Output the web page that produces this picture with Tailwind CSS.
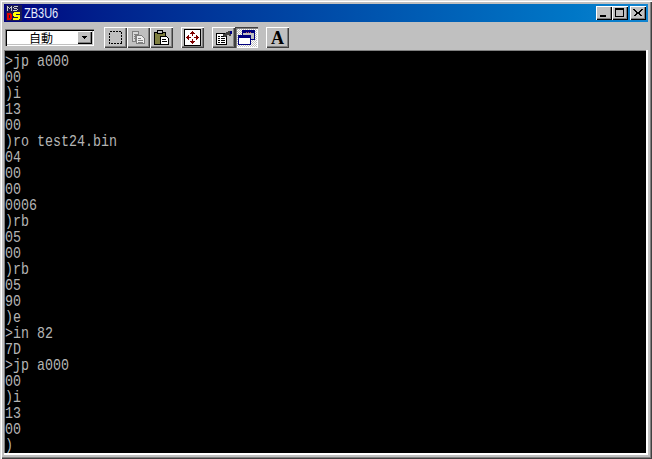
<!DOCTYPE html>
<html lang="ja">
<head>
  <meta charset="utf-8"/>
  <title>ZB3U6</title>
  <script src="https://cdn.jsdelivr.net/npm/@tailwindcss/browser@4"></script>
</head>
<body class="bg-[#c0c0c0] overflow-hidden">
  <!-- window frame -->
  <div class="w-[652px] h-[459px] flex flex-col bg-[#c0c0c0] pt-1 pb-[4px] pl-1 pr-[4px] shadow-[inset_1px_1px_0_#dfdfdf,inset_2px_2px_0_#ffffff,inset_-1px_-1px_0_#404040,inset_-2px_-2px_0_#808080]">
    <!-- title bar -->
    <div class="h-[18px] shrink-0 flex items-center bg-gradient-to-r from-[#000080] to-[#1084d0] pl-[2px] pr-[2px]">
      <svg class="w-4 h-4 shrink-0" viewBox="0 0 16 16" shape-rendering="crispEdges">
        <rect x="0" y="0" width="16" height="16" fill="#1a1a50"/>
        <path d="M1 1h1v5h-1zM2 2h1v1h-1zM3 3h1v1h-1zM4 2h1v1h-1zM5 1h1v5h-1z" fill="#c8c8c8"/>
        <path d="M8 1h4v1h-4zM7 2h1v1h-1zM8 3h3v1h-3zM11 4h1v1h-1zM7 5h4v1h-4z" fill="#c8c8c8"/>
        <path d="M1 8h4v1h1v5h-1v1h-4zM3 10v3h1v-3z" fill="#e00000"/>
        <path d="M8 7h6v2h-4v1h4v4h-1v1h-6v-2h5v-1h-4v-1h-1v-3h1z" fill="#ffff00"/>
      </svg>
      <span class="ml-[2px] inline-block scale-y-125 text-[11px] leading-none text-[#e8eeff] font-['Liberation_Sans',sans-serif]">ZB3U6</span>
      <div class="ml-auto flex items-center">
        <button class="w-4 h-[14px] bg-[#c0c0c0] shadow-[inset_1px_1px_0_#fff,inset_-1px_-1px_0_#000,inset_-2px_-2px_0_#808080] flex items-end pl-[4px] pb-[3px]"><span class="block w-[6px] h-[2px] bg-black"></span></button>
        <button class="w-4 h-[14px] bg-[#c0c0c0] shadow-[inset_1px_1px_0_#fff,inset_-1px_-1px_0_#000,inset_-2px_-2px_0_#808080] flex items-start pl-[3px] pt-[2px]"><span class="block w-[9px] h-[9px] border border-black border-t-2"></span></button>
        <button class="ml-[2px] w-4 h-[14px] bg-[#c0c0c0] shadow-[inset_1px_1px_0_#fff,inset_-1px_-1px_0_#000,inset_-2px_-2px_0_#808080] flex items-center justify-center">
          <svg class="w-[10px] h-2" viewBox="0 0 10 8" shape-rendering="crispEdges"><path d="M0 0h2v1h1v1h1v1h2v-1h1v-1h1v-1h2v1h-1v1h-1v1h-1v2h1v1h1v1h-2v-1h-1v-1h-2v1h-1v1h-2v-1h1v-1h1v-2h-1v-1h-1v-1h-1z" fill="#000"/></svg>
        </button>
      </div>
    </div>

    <!-- toolbar -->
    <div class="h-[28px] shrink-0 flex items-center pl-[1px] pt-[3px]">
      <div class="w-[89px] h-[17px] bg-white shadow-[inset_1px_1px_0_#808080,inset_2px_2px_0_#000,inset_-1px_-1px_0_#fff,inset_-2px_-2px_0_#c0c0c0] flex items-center pr-[2px]">
        <span class="flex-1 text-center text-[12px] leading-none text-black font-['Noto_Sans_CJK_JP',sans-serif]">自動</span>
        <span class="w-[15px] h-[13px] bg-[#c0c0c0] shadow-[inset_1px_1px_0_#fff,inset_-1px_-1px_0_#000,inset_-2px_-2px_0_#808080] flex items-center justify-center">
          <svg class="w-[7px] h-1" viewBox="0 0 7 4" shape-rendering="crispEdges"><path d="M1 0h5v1h-1v1h-1v1h-1v-1h-1v-1h-1z" fill="#000"/></svg>
        </span>
      </div>

      <div class="ml-[10px] flex">
        <!-- select -->
        <button class="w-[23px] h-[21px] flex items-center justify-center bg-[#c0c0c0] shadow-[inset_1px_1px_0_#fff,inset_-1px_-1px_0_#404040,inset_-2px_-2px_0_#808080]">
          <svg class="w-[15px] h-[15px]" viewBox="0 0 15 15" shape-rendering="crispEdges"><rect x="1.5" y="1.5" width="12" height="12" fill="none" stroke="#000" stroke-dasharray="2 1"/></svg>
        </button>
        <!-- copy, greyed -->
        <button class="w-[23px] h-[21px] flex items-center justify-center bg-[#c0c0c0] shadow-[inset_1px_1px_0_#fff,inset_-1px_-1px_0_#404040,inset_-2px_-2px_0_#808080]">
          <svg class="w-[15px] h-[15px]" viewBox="0 0 15 15" shape-rendering="crispEdges">
            <path d="M1.5 1.5h6v3h-3v7h-3z" fill="#d8d8d8" stroke="#808080"/>
            <path d="M5.5 5.5h5l3 3v5h-8z" fill="#eeeeee" stroke="#808080"/>
            <path d="M3 4h3M3 6h1M3 8h1M7 8h3M7 10h5M7 12h5" stroke="#808080"/>
          </svg>
        </button>
        <!-- paste -->
        <button class="w-[23px] h-[21px] flex items-center justify-center bg-[#c0c0c0] shadow-[inset_1px_1px_0_#fff,inset_-1px_-1px_0_#404040,inset_-2px_-2px_0_#808080]">
          <svg class="w-[17px] h-[17px]" viewBox="0 0 17 17" shape-rendering="crispEdges">
            <path d="M1.5 3.5h11v12h-11z" fill="#808040" stroke="#000"/>
            <path d="M4.5 1.5h5v3h-5z" fill="#c0c0c0" stroke="#000"/>
            <path d="M7.5 7.5h6l2 2v6h-8z" fill="#fff" stroke="#000"/>
            <path d="M9 10h4M9 12h5" stroke="#000"/>
          </svg>
        </button>
        <!-- fit -->
        <button class="ml-2 w-[23px] h-[21px] flex items-center justify-center bg-[#c0c0c0] shadow-[inset_1px_1px_0_#fff,inset_-1px_-1px_0_#404040,inset_-2px_-2px_0_#808080]">
          <svg class="w-[17px] h-[17px]" viewBox="0 0 17 17" shape-rendering="crispEdges">
            <rect x="0.5" y="0.5" width="16" height="16" fill="#fff" stroke="#000"/>
            <path d="M8 2h1v1h1v1h1v1h-2v2h-1v-2h-2v-1h1v-1h1zM8 10h1v2h2v1h-1v1h-1v1h-1v-1h-1v-1h-1v-1h2zM5 6v2h2v1h-2v2h-1v-1h-1v-1h-1v-1h1v-1h1v-1zM12 6h1v1h1v1h1v1h-1v1h-1v1h-1v-2h-2v-1h2z" fill="#800000"/>
          </svg>
        </button>
        <!-- properties -->
        <button class="ml-2 w-[23px] h-[21px] flex items-center justify-center bg-[#c0c0c0] shadow-[inset_1px_1px_0_#fff,inset_-1px_-1px_0_#404040,inset_-2px_-2px_0_#808080]">
          <svg class="w-[18px] h-[17px]" viewBox="0 0 18 17" shape-rendering="crispEdges">
            <path d="M1.5 4.5h10v11h-10z" fill="#fff" stroke="#000"/>
            <path d="M3 7h2M6 7h4M3 9h2M6 9h4M3 11h2M6 11h4M3 13h2M6 13h4" stroke="#000"/>
            <path d="M8 5h2v-1h1v-1h2v-1h3v1h-1v2h1v2h-2v-1h-2v1h-1v1h-2v-1h-1z" fill="#404040"/>
            <rect x="15" y="2" width="2" height="3" fill="#000080"/>
          </svg>
        </button>
        <!-- window, pressed -->
        <button class="w-[23px] h-[21px] flex items-center justify-center bg-[repeating-conic-gradient(#ffffff_0_25%,#c0c0c0_0_50%)] bg-[length:2px_2px] shadow-[inset_1px_1px_0_#404040,inset_2px_2px_0_#808080,inset_-1px_-1px_0_#fff]">
          <svg class="w-[17px] h-[15px]" viewBox="0 0 17 15" shape-rendering="crispEdges">
            <path d="M4.5 0.5h12v9h-12z" fill="#c0c0c0" stroke="#000080"/>
            <rect x="5" y="1" width="11" height="2" fill="#000080"/>
            <path d="M8 2h6" stroke="#c06060" stroke-dasharray="1 1"/>
            <path d="M0.5 5.5h12v9h-12z" fill="#fff" stroke="#000080"/>
            <rect x="1" y="6" width="11" height="2" fill="#000080"/>
          </svg>
        </button>
        <!-- font -->
        <button class="ml-2 w-[23px] h-[21px] flex items-center justify-center bg-[#c0c0c0] shadow-[inset_1px_1px_0_#fff,inset_-1px_-1px_0_#404040,inset_-2px_-2px_0_#808080]">
          <span class="text-[18px] leading-none font-bold text-black font-['Liberation_Serif',serif]">A</span>
        </button>
      </div>
    </div>

    <!-- terminal output -->
    <div class="flex-1 min-h-0 overflow-hidden bg-black pt-[4px] pl-[1px] shadow-[inset_1px_1px_0_#808080] border-r-2 border-b-2 border-white">
      <pre class="origin-top scale-y-[1.2] text-[13.33px] leading-[13.33px] text-[#b4b4b4] font-['Liberation_Mono',monospace]">&gt;jp a000
00
)i
13
00
)ro test24.bin
04
00
00
0006
)rb
05
00
)rb
05
90
)e
&gt;in 82
7D
&gt;jp a000
00
)i
13
00
)</pre>
    </div>
  </div>
</body>
</html>
